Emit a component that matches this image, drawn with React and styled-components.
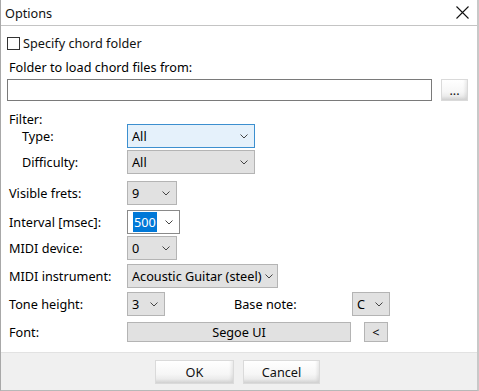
import React from 'react'
import styled, { createGlobalStyle } from 'styled-components'

const Global = createGlobalStyle`
  html, body {
    margin: 0;
    padding: 0;
    background: #ffffff;
  }
  body {
    font-family: "Segoe UI", "Noto Sans", sans-serif;
    font-size: 12.7px;
    color: #000;
  }
`

function Chevron() {
  return (
    <svg width="8" height="5" viewBox="0 0 8 5">
      <path d="M0.5 0.5 L4 4 L7.5 0.5" fill="none" stroke="#444" strokeWidth="1" />
    </svg>
  )
}

function Combo({ value, width, variant, selected }) {
  return (
    <ComboBox $width={width} $variant={variant}>
      {selected ? <Selected>{value}</Selected> : <span>{value}</span>}
      <ChevronSlot>
        <Chevron />
      </ChevronSlot>
    </ComboBox>
  )
}

function App() {
  return (
    <>
      <Global />
      <Window>
        <TitleBar>
          <Title>Options</Title>
          <CloseIcon viewBox="0 0 13 13">
            <path d="M0.5 0.5 L12.5 12.5 M12.5 0.5 L0.5 12.5" stroke="#111" strokeWidth="1.1" />
          </CloseIcon>
        </TitleBar>
        <Content>
          <CheckRow>
            <CheckBox />
            <span>Specify chord folder</span>
          </CheckRow>
          <Caption $top={9}>Folder to load chord files from:</Caption>
          <PathRow>
            <PathInput />
            <DialogButton $width={27} $height={22}>...</DialogButton>
          </PathRow>
          <FilterCaption>Filter:</FilterCaption>
          <Row $top={0}>
            <Label $indent>Type:</Label>
            <Combo value="All" width={128} variant="focus" />
          </Row>
          <Row $top={2}>
            <Label $indent>Difficulty:</Label>
            <Combo value="All" width={128} />
          </Row>
          <Row $top={7}>
            <Label>Visible frets:</Label>
            <Combo value="9" width={50} />
          </Row>
          <Row $top={5}>
            <Label>Interval [msec]:</Label>
            <Combo value="500" width={53} variant="edit" selected />
          </Row>
          <Row $top={2}>
            <Label>MIDI device:</Label>
            <Combo value="0" width={50} />
          </Row>
          <Row $top={4}>
            <Label>MIDI instrument:</Label>
            <Combo value="Acoustic Guitar (steel)" width={151} />
          </Row>
          <Row $top={4}>
            <Label>Tone height:</Label>
            <Combo value="3" width={38} />
            <BaseLabel>Base note:</BaseLabel>
            <Combo value="C" width={38} />
          </Row>
          <Row $top={6} $height={20}>
            <Label>Font:</Label>
            <FlatButton $width={224}>Segoe UI</FlatButton>
            <FlatButton $width={24} $left={13}>&lt;</FlatButton>
          </Row>
        </Content>
        <Footer>
          <DialogButton $width={79} $height={24}>OK</DialogButton>
          <DialogButton $width={77} $height={24}>Cancel</DialogButton>
        </Footer>
      </Window>
    </>
  )
}

export default App

const Window = styled.div`
  width: 479px;
  height: 391px;
  box-sizing: border-box;
  display: flex;
  flex-direction: column;
  border-left: 1px solid #a8a8a8;
  border-right: 2px solid #c8c8c8;
  border-bottom: 1px solid #b8b8b8;
  background: #fff;
`

const TitleBar = styled.div`
  height: 26px;
  box-sizing: border-box;
  border-bottom: 1px solid #c4c4c4;
  display: flex;
  align-items: center;
  justify-content: space-between;
  padding: 0 8px 0 4px;
`

const Title = styled.span`
  font-size: 12.7px;
  color: #111;
`

const CloseIcon = styled.svg`
  width: 13px;
  height: 13px;
`

const Content = styled.div`
  flex: 1;
  display: flex;
  flex-direction: column;
  padding: 0 0 0 6px;
`

const CheckRow = styled.div`
  margin-top: 10px;
  height: 14px;
  display: flex;
  align-items: center;
  gap: 3px;
  color: #111;
`

const CheckBox = styled.div`
  width: 13px;
  height: 13px;
  box-sizing: border-box;
  border: 1px solid #333;
  background: #fff;
`

const Caption = styled.div`
  margin-top: ${p => p.$top}px;
  height: 16px;
  line-height: 16px;
  padding-left: 2px;
`

const PathRow = styled.div`
  margin-top: 4px;
  height: 22px;
  display: flex;
  gap: 9px;
`

const PathInput = styled.div`
  width: 425px;
  height: 22px;
  box-sizing: border-box;
  border: 1px solid #7a7a7a;
  background: #fff;
`

const FilterCaption = styled.div`
  margin-top: 11px;
  height: 12px;
  line-height: 14px;
  padding-left: 2px;
`

const Row = styled.div`
  margin-top: ${p => p.$top}px;
  height: ${p => p.$height || 24}px;
  display: flex;
  align-items: center;
`

const Label = styled.div`
  width: 120px;
  box-sizing: border-box;
  padding-left: ${p => (p.$indent ? 15 : 2)}px;
  flex-shrink: 0;
`

const ComboBox = styled.div`
  width: ${p => p.$width}px;
  height: 24px;
  box-sizing: border-box;
  display: flex;
  align-items: center;
  justify-content: space-between;
  padding: 0 6px 0 4px;
  white-space: nowrap;
  border: 1px solid
    ${p => (p.$variant === 'focus' ? '#3c8fcf' : p.$variant === 'edit' ? '#8a8a8a' : '#b4b4b4')};
  background: ${p => (p.$variant === 'focus' ? '#e5f1fb' : p.$variant === 'edit' ? '#fff' : '#e1e1e1')};
`

const ChevronSlot = styled.span`
  display: flex;
  align-items: center;
  margin-left: 4px;
`

const Selected = styled.span`
  background: #0078d7;
  color: #fff;
  padding: 1px 1px;
  margin-left: 1px;
`

const BaseLabel = styled.div`
  margin-left: 69px;
  width: 118px;
`

const FlatButton = styled.div`
  width: ${p => p.$width}px;
  margin-left: ${p => p.$left || 0}px;
  height: 20px;
  box-sizing: border-box;
  border: 1px solid #b4b4b4;
  background: #e1e1e1;
  display: flex;
  align-items: center;
  justify-content: center;
`

const Footer = styled.div`
  height: 38px;
  box-sizing: border-box;
  border-top: 1px solid #e2e2e2;
  background: #f0f0f0;
  display: flex;
  justify-content: flex-start;
  align-items: flex-start;
  gap: 9px;
  padding-top: 7px;
  padding-left: 154px;
`

const DialogButton = styled.div`
  width: ${p => p.$width}px;
  height: ${p => p.$height}px;
  box-sizing: border-box;
  display: flex;
  align-items: center;
  justify-content: center;
  border: 1px solid #dadada;
  background: linear-gradient(to bottom, #ffffff 0%, #f6f6f6 60%, #e2e2e2 100%);
  box-shadow: inset -2px -2px 3px rgba(0, 0, 0, 0.08);
  color: #111;
`
